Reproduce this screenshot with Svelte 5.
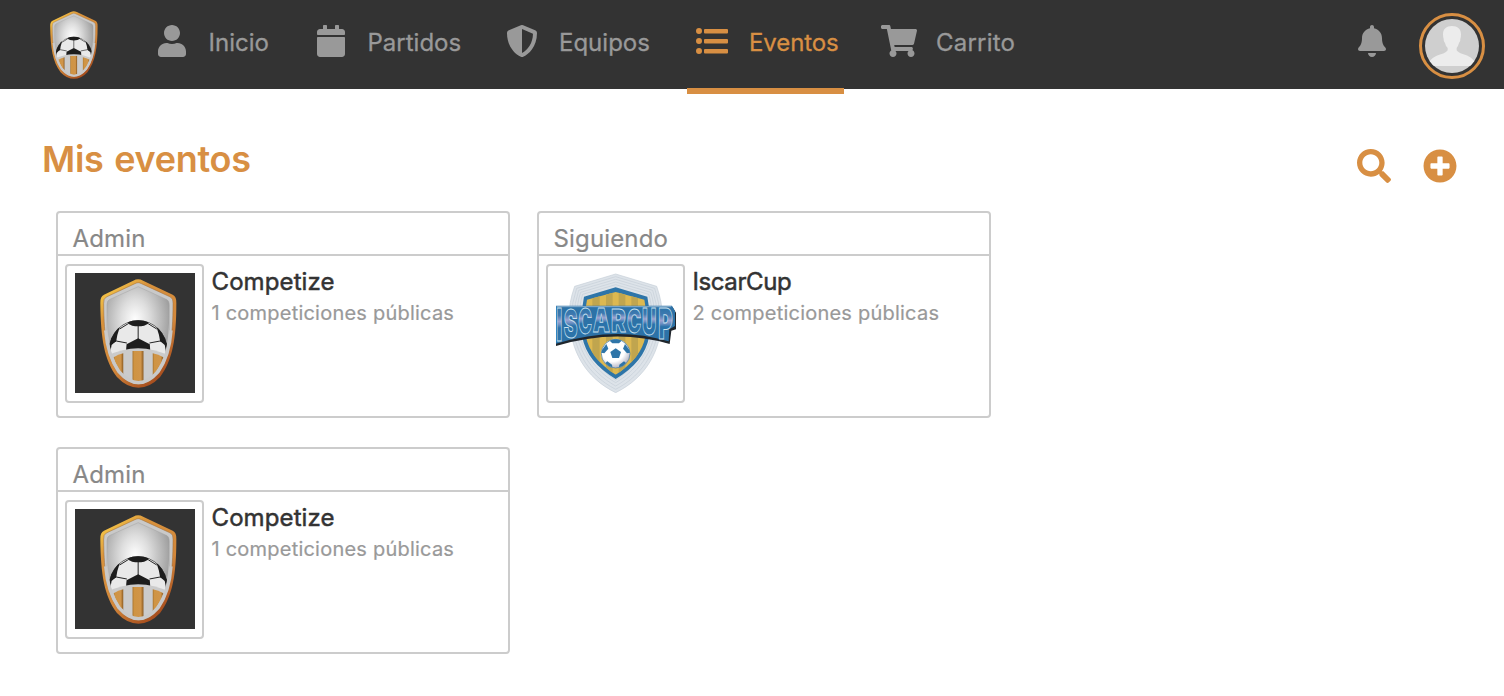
<script lang="ts">
	type Icon = { width: number; path: string };

	const icons: Record<string, Icon> = {
		user: {
			width: 448,
			path: 'M224 256c70.7 0 128-57.3 128-128S294.7 0 224 0 96 57.3 96 128s57.3 128 128 128zm89.6 32h-16.7c-22.2 10.2-46.9 16-72.9 16s-50.6-5.8-72.9-16h-16.7C60.2 288 0 348.2 0 422.4V464c0 26.5 21.5 48 48 48h352c26.5 0 48-21.5 48-48v-41.6c0-74.2-60.2-134.4-134.4-134.4z'
		},
		calendar: {
			width: 448,
			path: 'M12 192h424c6.6 0 12 5.4 12 12v260c0 26.5-21.5 48-48 48H48c-26.5 0-48-21.5-48-48V204c0-6.6 5.4-12 12-12zm436-44v-36c0-26.5-21.5-48-48-48h-48V12c0-6.6-5.4-12-12-12h-40c-6.6 0-12 5.4-12 12v52H160V12c0-6.6-5.4-12-12-12h-40c-6.6 0-12 5.4-12 12v52H48C21.5 64 0 85.5 0 112v36c0 6.6 5.4 12 12 12h424c6.6 0 12-5.4 12-12z'
		},
		shield: {
			width: 512,
			path: 'M466.5 83.7l-192-80a48.15 48.15 0 0 0-36.9 0l-192 80C27.7 91.1 16 108.6 16 128c0 198.5 114.5 335.7 221.5 380.3 11.8 4.9 25.1 4.9 36.9 0C360.1 472.6 496 349.3 496 128c0-19.4-11.7-36.9-29.5-44.3zM256.1 446.3l-.1-381 175.9 73.3c-3.3 151.4-82.1 261.1-175.8 307.7z'
		},
		list: {
			width: 512,
			path: 'M48 48a48 48 0 1 0 0 96 48 48 0 1 0 0-96zm0 160a48 48 0 1 0 0 96 48 48 0 1 0 0-96zm0 160a48 48 0 1 0 0 96 48 48 0 1 0 0-96zM144 64h352a16 16 0 0 1 16 16v40a16 16 0 0 1-16 16H144a16 16 0 0 1-16-16V80a16 16 0 0 1 16-16zm0 160h352a16 16 0 0 1 16 16v40a16 16 0 0 1-16 16H144a16 16 0 0 1-16-16v-40a16 16 0 0 1 16-16zm0 160h352a16 16 0 0 1 16 16v40a16 16 0 0 1-16 16H144a16 16 0 0 1-16-16v-40a16 16 0 0 1 16-16z'
		},
		cart: {
			width: 576,
			path: 'M528.12 301.319l47.273-208C578.806 78.301 567.391 64 551.99 64H159.208l-9.166-44.81C147.758 8.021 137.93 0 126.529 0H24C10.745 0 0 10.745 0 24v16c0 13.255 10.745 24 24 24h69.883l70.248 343.435C147.325 417.1 136 435.222 136 456c0 30.928 25.072 56 56 56s56-25.072 56-56c0-15.674-6.447-29.835-16.824-40h209.647C430.447 426.165 424 440.326 424 456c0 30.928 25.072 56 56 56s56-25.072 56-56c0-22.172-12.888-41.332-31.579-50.405l5.517-24.276c3.413-15.018-8.002-29.319-23.403-29.319H218.117l-6.545-32h293.145c11.206 0 20.92-7.754 23.403-18.681z'
		},
		bell: {
			width: 448,
			path: 'M224 512c35.32 0 63.97-28.65 63.97-64H160.03c0 35.35 28.65 64 63.97 64zm215.39-149.71c-19.32-20.76-55.47-51.99-55.47-154.29 0-77.7-54.48-139.9-127.94-155.16V32c0-17.67-14.32-32-31.98-32s-31.98 14.33-31.98 32v20.84C118.56 68.1 64.08 130.3 64.08 208c0 102.3-36.15 133.53-55.47 154.29-6 6.45-8.66 14.16-8.61 21.71.11 16.4 12.98 32 32.1 32h383.8c19.12 0 32-15.6 32.1-32 .05-7.55-2.61-15.27-8.61-21.71z'
		},
		search: {
			width: 512,
			path: 'M505 442.7L405.3 343c-4.5-4.5-10.6-7-17-7H372c27.6-35.3 44-79.7 44-128C416 93.1 322.9 0 208 0S0 93.1 0 208s93.1 208 208 208c48.3 0 92.7-16.4 128-44v16.3c0 6.4 2.5 12.5 7 17l99.7 99.7c9.4 9.4 24.6 9.4 33.9 0l28.3-28.3c9.4-9.4 9.4-24.6.1-34zM208 336c-70.7 0-128-57.2-128-128 0-70.7 57.2-128 128-128 70.7 0 128 57.2 128 128 0 70.7-57.2 128-128 128z'
		},
		plus: {
			width: 512,
			path: 'M256 8C119 8 8 119 8 256s111 248 248 248 248-111 248-248S393 8 256 8zm144 276c0 6.6-5.4 12-12 12h-92v92c0 6.6-5.4 12-12 12h-56c-6.6 0-12-5.4-12-12v-92h-92c-6.6 0-12-5.4-12-12v-56c0-6.6 5.4-12 12-12h92v-92c0-6.6 5.4-12 12-12h56c6.6 0 12 5.4 12 12v92h92c6.6 0 12 5.4 12 12v56z'
		}
	};

	const menu = [
		{ id: 'inicio', label: 'Inicio', icon: 'user' },
		{ id: 'partidos', label: 'Partidos', icon: 'calendar' },
		{ id: 'equipos', label: 'Equipos', icon: 'shield' },
		{ id: 'eventos', label: 'Eventos', icon: 'list' },
		{ id: 'carrito', label: 'Carrito', icon: 'cart' }
	];

	let active = $state('eventos');

	const events = [
		{ role: 'Admin', name: 'Competize', count: 1, logo: 'competize' },
		{ role: 'Siguiendo', name: 'IscarCup', count: 2, logo: 'iscarcup' },
		{ role: 'Admin', name: 'Competize', count: 1, logo: 'competize' }
	];

	// left edge, horizontal stretch and bottom of each letter in the IscarCup wordmark
	const letters = [
		{ char: 'I', x: 79, stretch: 0.62, bottom: 423 },
		{ char: 'S', x: 101, stretch: 0.62, bottom: 413 },
		{ char: 'C', x: 145, stretch: 0.55, bottom: 402 },
		{ char: 'A', x: 188, stretch: 0.65, bottom: 396 },
		{ char: 'R', x: 243, stretch: 0.67, bottom: 395 },
		{ char: 'C', x: 291, stretch: 0.57, bottom: 398 },
		{ char: 'U', x: 336, stretch: 0.6, bottom: 405 },
		{ char: 'P', x: 385, stretch: 0.66, bottom: 417 }
	];
</script>

{#snippet icon(name: string, size: number)}
	<svg
		viewBox="0 0 {icons[name].width} 512"
		width={(icons[name].width / 512) * size}
		height={size}
		fill="currentColor"
		aria-hidden="true"
	>
		<path d={icons[name].path} />
	</svg>
{/snippet}

{#snippet competizeShield(id: string)}
	<svg class="shield" viewBox="29 26 232 327" preserveAspectRatio="none" aria-hidden="true">
		<defs>
			<linearGradient id="{id}-edge" x1="0" y1="0" x2="0.6" y2="1">
				<stop offset="0" stop-color="#d08a35" />
				<stop offset="0.14" stop-color="#f0bd45" />
				<stop offset="0.3" stop-color="#d8923c" />
				<stop offset="0.7" stop-color="#d2873b" />
				<stop offset="1" stop-color="#a9501f" />
			</linearGradient>
			<radialGradient id="{id}-panel" cx="0.45" cy="0.36" r="0.5">
				<stop offset="0" stop-color="#fff" />
				<stop offset="0.4" stop-color="#dedede" />
				<stop offset="1" stop-color="#a0a0a0" />
			</radialGradient>
			<linearGradient id="{id}-stripe" x1="0" x2="1" y1="0" y2="0">
				<stop offset="0" stop-color="#a8742f" />
				<stop offset="0.15" stop-color="#cf9443" />
				<stop offset="0.75" stop-color="#d0954a" />
				<stop offset="1" stop-color="#8b5a20" />
			</linearGradient>
			<clipPath id="{id}-inner">
				<path d="M144 49L231 88Q237 91 238 103C238 200 230 258 202 300Q177 334 145 334Q113 334 86 300C58 258 50 200 50 103Q51 91 57 88Z" />
			</clipPath>
			<clipPath id="{id}-ball">
				<ellipse cx="144" cy="238" rx="88" ry="88" />
			</clipPath>
		</defs>
		<path
			fill="url(#{id}-edge)"
			d="M144 27Q151 27 159 31L248 73Q260 79 259 98C259 204 248 270 210 320Q180 352 145 352Q110 352 80 320C42 270 31 204 30 98Q29 79 41 73L129 31Q137 27 144 27Z"
		/>
		<path
			fill="#c9c9c9"
			stroke="#9b6a35"
			stroke-width="1.5"
			d="M144 37Q148 37 154 40L241 80Q250 85 249 99C249 202 239 264 203 312Q175 342 145 342Q115 342 87 312C50 264 41 202 40 99Q39 85 48 80L134 40Q140 37 144 37Z"
		/>
		<g clip-path="url(#{id}-inner)">
			<rect x="40" y="40" width="210" height="300" fill="url(#{id}-panel)" stroke="#999" />
			<g clip-path="url(#{id}-ball)">
				<rect x="50" y="140" width="190" height="120" fill="#e9e9e9" />
				<ellipse cx="144" cy="238" rx="88" ry="88" fill="none" stroke="#333" stroke-width="4" />
				<g fill="none" stroke="#222" stroke-width="3">
					<path d="M144 165V206M110 218L78 212M178 218L210 212M114 160L88 176M174 160L200 176M78 212L60 220M210 212L230 220" />
				</g>
				<g fill="#1d1d1d">
					<path d="M112 146h64l-2 14-12 6q-18 4-36 0l-12-6z" />
					<path d="M144 204l35 18 2 26h-74l2-26z" />
					<path d="M50 224l10-30 22-26 6 4q-8 22-10 40l-14 12-4 22z" />
					<path d="M238 224l-10-30-22-26-6 4q8 22 10 40l14 12 4 22z" />
				</g>
			</g>
			<path fill="#cbcbcb" d="M40 262Q144 206 248 262V350H40Z" />
			<g fill="url(#{id}-stripe)">
				<rect x="127" y="242" width="33" height="92" />
				<path d="M70 261Q84 252 99 249V315Q80 294 70 261Z" />
				<path d="M188 249Q205 252 220 261Q208 294 188 315Z" />
			</g>
		</g>
		<path
			fill="none"
			stroke="#999"
			stroke-opacity="0.6"
			stroke-width="2"
			d="M50 215V103Q51 91 57 88L144 49L231 88Q237 91 238 103V215"
		/>
		<path fill="none" stroke="#c9c9c9" stroke-width="10" d="M46 180Q52 256 86 304Q115 337 145 337Q175 337 204 304Q238 256 243 180" />
	</svg>
{/snippet}

{#snippet iscarcupLogo()}
	<svg class="iscarcup" viewBox="78 219 360 360" aria-hidden="true">
		<defs>
			<linearGradient id="letter-fill" gradientUnits="userSpaceOnUse" x1="0" y1="-73" x2="0" y2="0">
				<stop offset="0" stop-color="#2d74a9" />
				<stop offset="0.22" stop-color="#3f79b0" />
				<stop offset="0.4" stop-color="#9ea3d0" />
				<stop offset="0.5" stop-color="#6c8fc2" />
				<stop offset="0.6" stop-color="#2a72aa" />
				<stop offset="1" stop-color="#2d74a9" />
			</linearGradient>
			<radialGradient id="football" cx="0.4" cy="0.35" r="0.7">
				<stop offset="0.6" stop-color="#fff" />
				<stop offset="1" stop-color="#aab" />
			</radialGradient>
			<clipPath id="gold">
				<path d="M257 276L343 299L346 318Q352 360 346 410Q334 474 257 524Q180 474 168 410Q162 360 168 318L171 299Z" />
			</clipPath>
		</defs>
		<g fill="#dde3e9" stroke="#c6cfd8" stroke-width="2">
			<path d="M257 222L380 259Q398 310 396 350C394 450 350 532 257 578C164 532 120 450 118 350Q116 310 134 259Z" />
			<path d="M257 230L374 265Q390 310 388 350C386 444 344 523 257 568C170 523 128 444 126 350Q124 310 140 265Z" />
			<path d="M257 238L368 271Q382 310 380 350C378 438 338 513 257 558C176 513 136 438 134 350Q132 310 146 271Z" />
			<path d="M257 246L362 277Q374 310 372 350C370 432 332 504 257 548C182 504 144 432 142 350Q140 310 152 277Z" />
			<path d="M257 254L356 283Q366 310 364 350C362 426 326 497 257 540C188 497 152 426 150 350Q148 310 158 283Z" />
		</g>
		<path fill="#2e75a8" d="M257 262L352 290L356 316Q364 364 357 412Q343 486 257 537Q171 486 157 412Q150 364 158 316L162 290Z" />
		<g clip-path="url(#gold)">
			<rect x="150" y="260" width="220" height="280" fill="#dcb850" />
			<g fill="#c0a54e">
				<rect x="187" y="260" width="22" height="270" />
				<rect x="228" y="260" width="20" height="270" />
				<rect x="266" y="260" width="20" height="270" />
				<rect x="304" y="260" width="20" height="270" />
			</g>
		</g>
		<path fill="#20262c" d="M82 322H428L438 338V388L424 392L419 432Q257 384 78 438V428Z" />
		<path fill="#2c72a7" d="M78 317H426L435 334V378L418 388L416 424Q257 376 78 431Z" />
		<path stroke="#b5cfe2" stroke-width="2" d="M80 320H424" />
		<g class="wordmark" fill="url(#letter-fill)" stroke="#c8e0ef">
			{#each letters as letter}
				<text
					transform="translate({letter.x} {letter.bottom}) scale({letter.stretch} {(letter.bottom -
						325) /
						73})">{letter.char}</text
				>
			{/each}
		</g>
		<circle cx="257" cy="461" r="43" fill="url(#football)" stroke="#3c77a6" stroke-width="2" />
		<g fill="#2e75a8">
			<path d="M257 445l16 11-6 18h-20l-6-18z" />
			<path d="M239 422q18-8 36 0l-8 8h-20z" />
			<path d="M216 450l13-18 6 14-12 14-9-2z" />
			<path d="M298 450l-13-18-6 14 12 14 9-2z" />
			<path d="M226 489l6-5 14 10 1 8q-13-3-21-13z" />
			<path d="M288 489l-6-5-14 10-1 8q13-3 21-13z" />
		</g>
	</svg>
{/snippet}

<header>
	<a class="brand" href="#inicio" aria-label="Competize">{@render competizeShield('brand')}</a>
	<nav>
		{#each menu as item}
			<button
				type="button"
				class={['menu-item', item.id, { active: active === item.id }]}
				onclick={() => (active = item.id)}
			>
				<span class="menu-icon">{@render icon(item.icon, 32)}</span>
				<span class="label">{item.label}</span>
			</button>
		{/each}
	</nav>
	<div class="account">
		<button type="button" class="bell" aria-label="Notificaciones">{@render icon('bell', 32)}</button>
		<button type="button" class="avatar" aria-label="Perfil">
			<svg viewBox="0 0 162 162" aria-hidden="true">
				<rect width="162" height="162" fill="#cfcfcf" />
				<path
					fill="#ececec"
					d="M81 21C98 21 108 30 108 46Q108 54 106 60Q107 67 102 72Q99 83 95 87V94Q99 101 113 105C132 111 145 118 151 132V141H11V132C17 118 31 111 50 105Q64 101 68 94V87Q62 82 60 72Q55 67 56 60Q54 54 54 46C54 30 64 21 81 21Z"
				/>
			</svg>
		</button>
	</div>
</header>

<main>
	<div class="title-row">
		<h1>Mis eventos</h1>
		<div class="actions">
			<button type="button" aria-label="Buscar">{@render icon('search', 34)}</button>
			<button type="button" aria-label="Crear evento">{@render icon('plus', 34)}</button>
		</div>
	</div>

	<div class="events">
		{#each events as event, i}
			<article>
				<div class="role">{event.role}</div>
				<div class="event">
					<div class="thumb">
						{#if event.logo === 'competize'}
							<div class="dark">{@render competizeShield(`event-${i}`)}</div>
						{:else}
							{@render iscarcupLogo()}
						{/if}
					</div>
					<div class="info">
						<h2 class:tight={event.logo === 'iscarcup'}>{event.name}</h2>
						<p>{event.count} competiciones públicas</p>
					</div>
				</div>
			</article>
		{/each}
	</div>
</main>

<style>
	:global(body) {
		margin: 0;
		background: #fff;
		font-family: Inter, 'Open Sans', sans-serif;
	}

	button {
		padding: 0;
		border: 0;
		background: none;
		color: inherit;
		font: inherit;
		cursor: pointer;
	}

	svg {
		display: block;
	}

	header {
		display: flex;
		box-sizing: border-box;
		height: 89px;
		padding: 0 19px 0 50px;
		background: #333;
		color: #999;
	}

	.brand {
		width: 48px;
		height: 68px;
		margin: 11px 48.5px 0 0;
	}

	.shield {
		width: 100%;
		height: 100%;
	}

	nav {
		display: flex;
		gap: 30px;
	}

	.menu-item {
		display: flex;
		box-sizing: border-box;
		height: 94px;
		padding: 0 6px 11px;
		border-bottom: 6px solid transparent;
		align-items: center;
		gap: 16px;
		font-size: 24px;
		white-space: nowrap;
	}

	.inicio {
		width: 129px;
	}

	.partidos {
		width: 161.5px;
	}

	.equipos {
		width: 160px;
	}

	.eventos {
		width: 157px;
		letter-spacing: -0.1px;
	}

	.carrito {
		letter-spacing: 0.2px;
	}

	.menu-item.active {
		border-color: #d88f43;
		color: #d88f43;
	}

	.menu-icon {
		display: flex;
		width: 40px;
		margin: 5px 1px 0 -1px;
		flex-shrink: 0;
		justify-content: center;
	}

	.label {
		margin-top: 8px;
		-webkit-text-stroke: 0.3px currentColor;
	}

	.account {
		display: flex;
		margin-left: auto;
		align-items: flex-start;
		gap: 33px;
	}

	.bell {
		margin-top: 25px;
	}

	.avatar {
		width: 66px;
		height: 66px;
		margin-top: 13px;
		padding: 3px;
		border: 3px solid #d88f43;
		border-radius: 50%;
	}

	.avatar svg {
		border-radius: 50%;
	}

	main {
		padding: 48px 47px 0 42px;
	}

	.title-row {
		display: flex;
		height: 74px;
		justify-content: space-between;
		color: #d88f43;
	}

	h1 {
		margin: 0;
		font-size: 36px;
		font-weight: 600;
		line-height: 44px;
		letter-spacing: -0.3px;
		word-spacing: 2px;
	}

	.actions {
		display: flex;
		margin-top: 12px;
		align-items: flex-start;
		gap: 32px;
	}

	.events {
		display: flex;
		margin-left: 14px;
		flex-wrap: wrap;
		gap: 29px 27px;
		width: 960px;
	}

	article {
		box-sizing: border-box;
		width: 454px;
		height: 207px;
		border: 2px solid #ccc;
		border-radius: 4px;
	}

	.role {
		box-sizing: border-box;
		height: 43px;
		padding: 11px 15px 0 14.5px;
		border-bottom: 2px solid #ccc;
		color: #888;
		font-size: 24px;
		line-height: 30px;
		letter-spacing: 0.15px;
		-webkit-text-stroke: 0.2px currentColor;
	}

	.event {
		display: flex;
		padding: 8px 7px;
		gap: 7.5px;
	}

	.thumb {
		box-sizing: border-box;
		width: 139px;
		height: 139px;
		padding: 7px 8px 8px;
		border: 2px solid #ccc;
		border-radius: 4px;
	}

	.dark {
		box-sizing: border-box;
		width: 120px;
		height: 120px;
		padding: 6px 18.5px 5px 24.5px;
		background: #333;
	}

	.iscarcup {
		width: 120px;
		height: 120px;
	}

	.wordmark {
		font-family: Inter, sans-serif;
		font-size: 100px;
		font-weight: 900;
	}

	.wordmark text {
		stroke-width: 2.5px;
	}

	h2 {
		margin: 3px 0 0;
		color: #333;
		font-size: 24px;
		font-weight: 400;
		line-height: 30px;
		letter-spacing: 0.1px;
		-webkit-text-stroke: 0.5px currentColor;
	}

	h2.tight {
		letter-spacing: -0.4px;
	}

	p {
		margin: 3px 0 0;
		color: #999;
		font-size: 20px;
		line-height: 26px;
		letter-spacing: 0.22px;
		-webkit-text-stroke: 0.2px currentColor;
	}
</style>
